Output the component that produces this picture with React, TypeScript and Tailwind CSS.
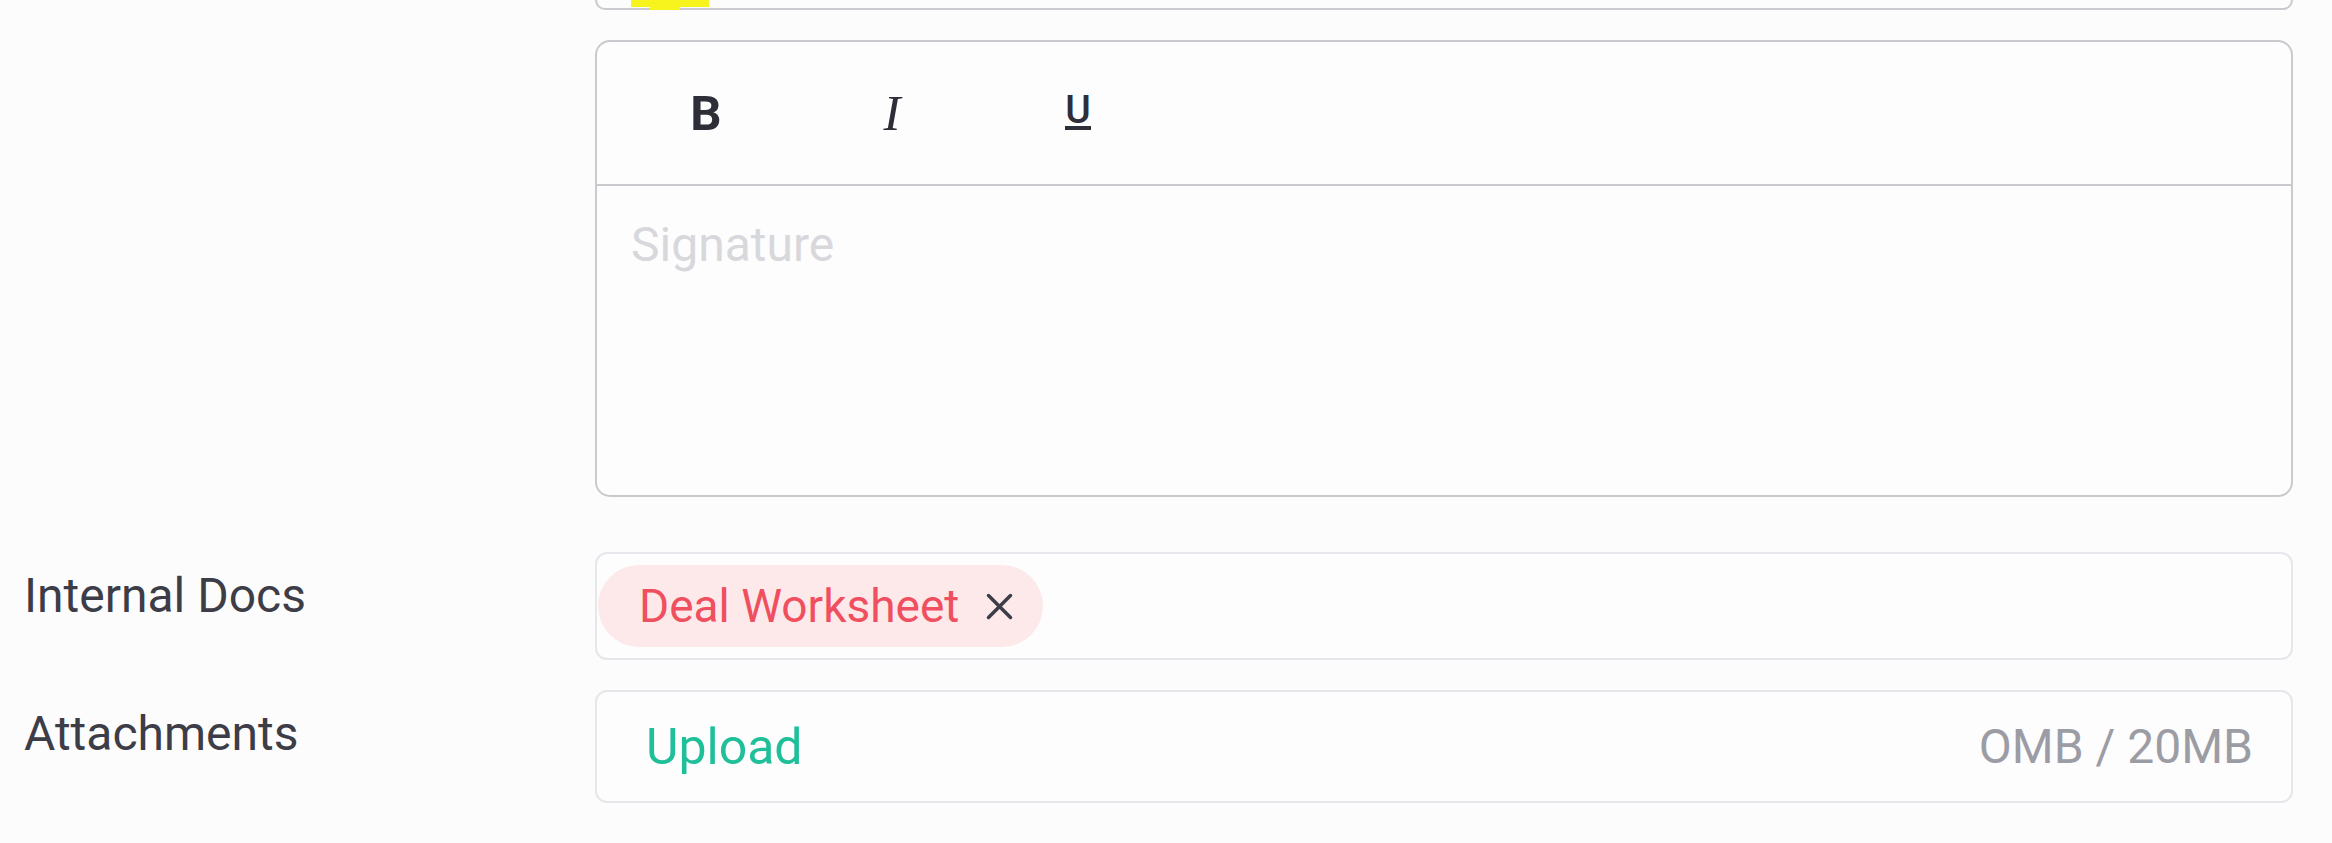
import React from "react";

function Row({ label, children, className = "" }: { label?: string; children: React.ReactNode; className?: string }) {
  return (
    <div className={`flex ${className}`}>
      <div className="w-[595px] shrink-0 pl-[24px]">
        {label && <div className="pt-[20px] text-[48px] leading-none text-[#3d3d47]">{label}</div>}
      </div>
      <div className="w-[1698px] shrink-0">{children}</div>
    </div>
  );
}

function Toolbar() {
  return (
    <div className="flex h-[144px] items-center border-b-2 border-[#c9c9ce] pl-[16px] text-[#2e2e38]">
      <div className="flex w-[186px] justify-center">
        <span className="text-[49px] font-bold leading-none">B</span>
      </div>
      <div className="flex w-[186px] justify-center">
        <span className="font-['Liberation_Serif',serif] text-[51px] italic leading-none">I</span>
      </div>
      <div className="flex w-[186px] justify-center">
        <span className="mb-[5px] inline-flex flex-col">
          <span className="text-[39px] font-medium leading-none">U</span>
          <span className="-mt-[4px] h-[4px] w-full bg-[#2e2e38]" />
        </span>
      </div>
    </div>
  );
}

export default function App() {
  return (
    <div className="h-[843px] w-[2332px] overflow-hidden bg-[#fcfcfd] font-['Roboto',sans-serif]">
      <Row>
        <div className="relative h-[10px] rounded-b-[15px] border-x-2 border-b-2 border-[#cacacf]">
          <div className="ml-[34px] h-[7px] w-[78px] bg-[#f6f41c]" />
          <div className="absolute left-[53px] top-[7px] h-[3px] w-[30px] bg-[#f6f41c]" />
        </div>
      </Row>

      <Row className="mt-[30px]">
        <div className="h-[457px] rounded-[15px] border-2 border-[#c9c9ce] bg-[#fdfdfe]">
          <Toolbar />
          <div className="h-[307px] pl-[34px] pt-[35px] text-[48px] leading-none text-[#d8d8dc]">Signature</div>
        </div>
      </Row>

      <Row label="Internal Docs" className="mt-[55px]">
        <div className="flex h-[108px] items-center rounded-[12px] border-2 border-[#e6e6eb] bg-[#fdfdfe] pl-px">
          <div className="flex h-[82px] items-center rounded-full bg-[#fde9ea] pl-[41px] pr-[30px]">
            <span className="text-[46px] leading-none text-[#ef4f5e]">Deal Worksheet</span>
            <svg className="ml-[27px]" width="27" height="27" viewBox="0 0 27 27" fill="none" stroke="#3d3d48" strokeWidth="3.5" strokeLinecap="round">
              <path d="M2.5 2.5L24.5 24.5M24.5 2.5L2.5 24.5" />
            </svg>
          </div>
        </div>
      </Row>

      <Row label="Attachments" className="mt-[30px]">
        <div className="flex h-[113px] items-center justify-between rounded-[12px] border-2 border-[#e6e6eb] bg-[#fdfdfe] pl-[49px] pr-[38px]">
          <span className="text-[50px] leading-none text-[#1fbf99]">Upload</span>
          <span className="text-[48px] leading-none text-[#9c9ca4]">OMB / 20MB</span>
        </div>
      </Row>
    </div>
  );
}
